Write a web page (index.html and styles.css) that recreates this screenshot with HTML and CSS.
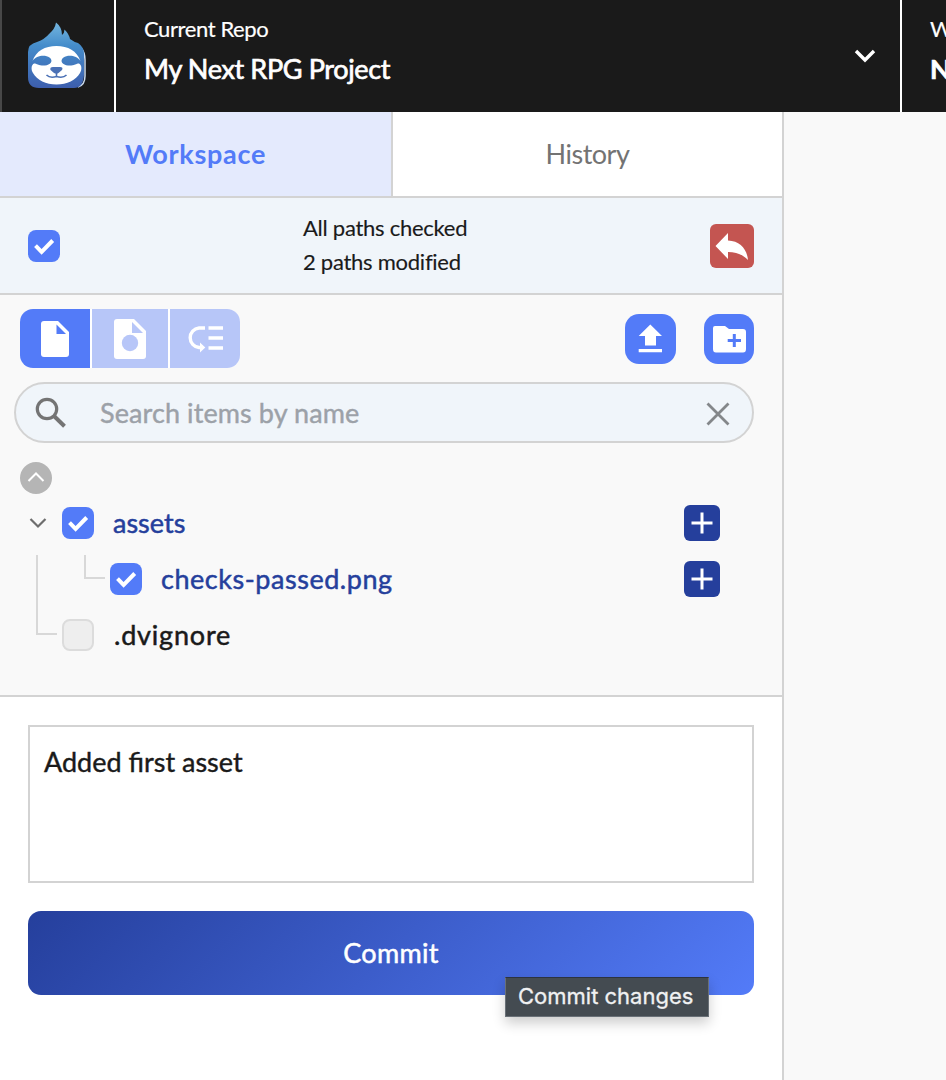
FILE: index.html
```
<!DOCTYPE html>
<html lang="en">
<head>
<meta charset="utf-8">
<title>Workspace</title>
<link rel="stylesheet" href="styles.css">
</head>
<body>
<svg class="defs" width="0" height="0">
  <symbol id="check" viewBox="0 0 32 32"><path d="M7.500 15.700L13.600 21.900L24.700 10.500" fill="none" stroke="#fff" stroke-width="4"/></symbol>
  <symbol id="plus" viewBox="0 0 36 36"><path d="M18 7.500V28.500M7.500 18H28.500" fill="none" stroke="#fff" stroke-width="3"/></symbol>
</svg>
<header class="topbar">
  <div class="brand">
    <svg width="60" height="70" viewBox="0 0 60 70">
      <defs><linearGradient id="fur" x1="0" y1="0" x2="0" y2="1"><stop offset="0" stop-color="#74b6df"/><stop offset=".35" stop-color="#458dcb"/><stop offset="1" stop-color="#3d5ead"/></linearGradient></defs>
      <path d="M53 26Q57 30 57 38V54Q57 63 50 65" fill="none" stroke="#c9daee" stroke-width="1.500"/>
      <path d="M9 20Q17 17 21 12Q27 7 28 .5Q34 5 34 13Q36.500 11 36.500 7.500Q41 12 42 17Q46 20 50 21Q56 25 56 32V53Q55 66 46 66H11Q0 66 0 55V30Q0 22 9 20Z" fill="url(#fur)"/>
      <path d="M4.500 39C8 29 17 24 28.500 24S49 29 52.500 39C49 33.500 40 32.500 35.500 35.500C31 39 35 43 40 43.500C46 44 48 41.500 51 41.500C54 43 54 48 52 51C48 58 39 62.500 28.500 62.500S9 58 5 51C3 48 3 43 6 41.500C9 41.500 11 44 17 43.500C22 43 26 39 21.500 35.500C17 32.500 8 33.500 4.500 39Z" fill="#fff"/>
      <path d="M22.500 48Q21.500 45 25 45H32Q35.500 45 34 48L30.500 51Q28.500 52.500 26 51Z" fill="#4a70b5"/>
      <path d="M18.500 53Q22 56.500 28.500 54.500Q35 56.500 38.500 53M28.500 51V55" fill="none" stroke="#4a70b5" stroke-width="1.600"/>
    </svg>
  </div>
  <div class="repo">
    <div><div class="caption current">Current Repo</div><div class="title project">My Next RPG Project</div></div>
    <svg class="caret" width="22" height="14" viewBox="0 0 22 14"><path d="M2 2L11 11L20 2" fill="none" stroke="#fff" stroke-width="3.400"/></svg>
  </div>
  <div class="space"><div class="caption">Workspace</div><div class="title next">No Workspace</div></div>
</header>
<main class="panel">
  <nav class="tabs"><div class="tab active"><span class="t-work">Workspace</span></div><div class="tab"><span class="t-hist">History</span></div></nav>
  <section class="status">
    <span class="box"><svg width="32" height="32"><use href="#check"/></svg></span>
    <div class="summary"><div class="s1">All paths checked</div><div class="s2">2 paths modified</div></div>
    <button class="revert"><svg width="44" height="44" viewBox="0 0 44 44"><path d="M5.500 22L18 9V16.500C30 17 37 25 38 36C32 30 26 28 18 28V35Z" fill="#fff"/></svg></button>
  </section>
  <section class="files">
    <div class="tools">
      <div class="segments">
        <div class="seg on"><svg width="70" height="59" viewBox="0 0 70 59"><path d="M24 12H38L49 23V45Q49 48 46 48H24Q21 48 21 45V15Q21 12 24 12Z" fill="#fff"/><path d="M36.500 15.500V25H46Z" fill="#537bf8"/></svg></div>
        <div class="seg"><svg width="76" height="59" viewBox="0 0 76 59"><path d="M25 10H42L54 22V47Q54 50 51 50H25Q22 50 22 47V13Q22 10 25 10Z" fill="#fff"/><path d="M40 13V24H51Z" fill="#b7c6f8"/><circle cx="38" cy="34" r="8.200" fill="#b7c6f8"/></svg></div>
        <div class="seg"><svg width="70" height="59" viewBox="0 0 70 59"><path d="M35 19H29A9.800 9.800 0 0 0 29 38.500H32M38.500 19H53M38.500 29H53M38.500 39H53" fill="none" stroke="#fff" stroke-width="3.400"/><path d="M30 33.500L35.300 38.500L30 43.500Z" fill="#fff"/></svg></div>
      </div>
      <div class="actions">
        <button class="action up"><svg width="51" height="50" viewBox="0 0 51 50"><path d="M25.300 10.500L37 22H31V31.500H20V22H13.700ZM13.700 35H37V38.300H13.700Z" fill="#fff"/></svg></button>
        <button class="action"><svg width="50" height="50" viewBox="0 0 50 50"><path d="M11 12H21L25 15H39Q42 15 42 18V35Q42 38.500 39 38.500H12Q9 38.500 9 35V14Q9 12 11 12Z" fill="#fff"/><path d="M30.300 20V33M23.700 26.500H37" stroke="#537bf8" stroke-width="3"/></svg></button>
      </div>
    </div>
    <div class="search">
      <svg width="34" height="34" viewBox="0 0 34 34"><circle cx="13" cy="13" r="9.700" fill="none" stroke="#747474" stroke-width="3.200"/><path d="M19.500 19.500L30.500 30.300" stroke="#747474" stroke-width="4"/></svg>
      <span class="placeholder">Search items by name</span>
      <svg class="clear" width="24" height="26" viewBox="0 0 24 26"><path d="M1.500 3.500L22.500 24.500M22.500 3.500L1.500 24.500" stroke="#84878a" stroke-width="2.800"/></svg>
    </div>
    <div class="collapse"><svg width="32" height="32" viewBox="0 0 32 32"><circle cx="16" cy="16" r="16" fill="#b5b5b5"/><path d="M8.500 19L16 11.500L23.500 19" fill="none" stroke="#fff" stroke-width="2"/></svg></div>
    <div class="tree">
      <div class="row">
        <svg class="twig" width="34" height="56" viewBox="0 0 34 56"><path d="M2.500 24L10 31.500L17.500 24" fill="none" stroke="#6e6e6e" stroke-width="2.200"/></svg>
        <span class="box"><svg width="32" height="32"><use href="#check"/></svg></span>
        <span class="name n-assets">assets</span>
        <button class="add"><svg width="36" height="36"><use href="#plus"/></svg></button>
      </div>
      <div class="row">
        <svg class="twig" width="82" height="56" viewBox="0 0 82 56"><path d="M9 4V56M57 4V27H77" fill="none" stroke="#d8d8d8" stroke-width="2"/></svg>
        <span class="box"><svg width="32" height="32"><use href="#check"/></svg></span>
        <span class="name n-png">checks-passed.png</span>
        <button class="add"><svg width="36" height="36"><use href="#plus"/></svg></button>
      </div>
      <div class="row">
        <svg class="twig" width="34" height="56" viewBox="0 0 34 56"><path d="M9 0V27H29" fill="none" stroke="#d8d8d8" stroke-width="2"/></svg>
        <span class="box empty"></span>
        <span class="name n-ign">.dvignore</span>
      </div>
    </div>
  </section>
  <section class="commit">
    <div class="message"><span class="t-msg">Added first asset</span></div>
    <div class="submit"><span class="t-commit">Commit</span><div class="tooltip"><span class="t-tip">Commit changes</span></div></div>
  </section>
</main>
</body>
</html>
```
FILE: styles.css
```
* { box-sizing: border-box; }
body { margin: 0; height: 1080px; overflow: hidden; background: #f9f9f9; color: #1a1a1a; font-family: Lato, "Liberation Sans", sans-serif; font-size: 27px; }
svg { display: block; flex: none; }
button { border: 0; padding: 0; margin: 0; }
.defs { position: absolute; }
.topbar { display: flex; height: 112px; background: #1a1a1a; color: #fff; border-left: 2px solid #484848; overflow: hidden; white-space: nowrap; }
.brand { width: 114px; flex: none; border-right: 2px solid #fff; padding: 22px 0 0 26px; }
.repo { width: 786px; flex: none; border-right: 2px solid #fff; padding: 15px 24px 0 28px; display: flex; justify-content: space-between; }
.caret { margin-top: 34px; }
.space { padding: 15px 0 0 28px; flex: none; }
.caption { font-size: 22px; line-height: 28px; -webkit-text-stroke: .2px; }
.current { letter-spacing: -.4px; }
.title { font-size: 27px; line-height: 32px; margin-top: 10px; -webkit-text-stroke: .7px; }
.project { letter-spacing: -.36px; }
.next { font-weight: 700; }
.panel { width: 784px; height: 968px; border-right: 2px solid #d3d3d3; background: #fff; display: flex; flex-direction: column; }
.tabs { display: flex; height: 86px; border-bottom: 2px solid #d3d3d3; flex: none; }
.tab { flex: 1; display: flex; align-items: center; justify-content: center; color: #737373; padding-bottom: 2px; }
.tab.active { flex: none; width: 393px; background: #e4eafd; color: #537bf8; font-weight: 700; border-right: 2px solid #d3d3d3; }
.t-work { letter-spacing: .7px; }
.t-hist { letter-spacing: -.5px; }
.status { height: 97px; flex: none; background: #f0f5fa; border-bottom: 2px solid #d3d3d3; padding: 0 28px; display: flex; align-items: center; justify-content: space-between; }
.box { width: 32px; height: 32px; border-radius: 8px; background: #537bf8; flex: none; }
.box.empty { background: #eee; border: 2px solid #dcdcdc; }
.summary { font-size: 22px; line-height: 34px; width: 164px; white-space: nowrap; margin-bottom: 2px; letter-spacing: -.26px; -webkit-text-stroke: .15px; }
.revert { width: 44px; height: 44px; border-radius: 6px; background: #c45551; }
.files { height: 402px; flex: none; background: #f9f9f9; border-bottom: 2px solid #d3d3d3; padding: 14px 28px 0 14px; }
.tools { display: flex; justify-content: space-between; padding-left: 6px; }
.segments { display: flex; gap: 2px; height: 59px; border-radius: 13px; overflow: hidden; background: #fff; }
.seg { background: #b7c6f8; }
.seg.on { background: #537bf8; }
.actions { display: flex; gap: 28px; padding-top: 5px; }
.action { width: 50px; height: 50px; border-radius: 14px; background: #537bf8; }
.action.up { width: 51px; }
.search { height: 61px; margin-top: 14px; border: 2px solid #d3d3d3; border-radius: 31px; background: #f0f5fa; display: flex; align-items: center; padding: 0 22px 0 18px; }
.placeholder { color: #9ca1a8; margin-left: 32px; letter-spacing: .1px; -webkit-text-stroke: .4px; }
.clear { margin-left: auto; }
.collapse { padding: 19px 0 0 6px; }
.tree { margin-top: 1px; padding-left: 14px; }
.row { height: 56px; display: flex; align-items: center; padding-right: 34px; }
.name { margin-left: 19px; padding-bottom: 2px; color: #253f9c; -webkit-text-stroke: .5px; }
.n-png { letter-spacing: .54px; }
.n-ign { color: #1a1a1a; margin-left: 20px; letter-spacing: .8px; }
.add { width: 36px; height: 36px; background: #253f9c; border-radius: 6px; margin-left: auto; }
.commit { padding: 28px; }
.message { height: 158px; border: 2px solid #d3d3d3; padding: 18px 14px; line-height: 34px; -webkit-text-stroke: .4px; }
.submit { position: relative; height: 84px; margin-top: 28px; border-radius: 13px; background: linear-gradient(135deg, #253f9c, #537bf8); color: #fff; display: flex; justify-content: center; align-items: center; -webkit-text-stroke: .5px; }
.t-commit { letter-spacing: .35px; padding-bottom: 2px; }
.tooltip { position: absolute; left: 477px; top: 66px; width: 204px; height: 40px; background: #444b51; border: 1px solid #697077; border-top-color: #2c3340; color: #f0f1f2; font: 22px/36px Inter, sans-serif; padding-left: 12px; box-shadow: 0 6px 12px #0003; -webkit-text-stroke: .3px; white-space: nowrap; }
```
